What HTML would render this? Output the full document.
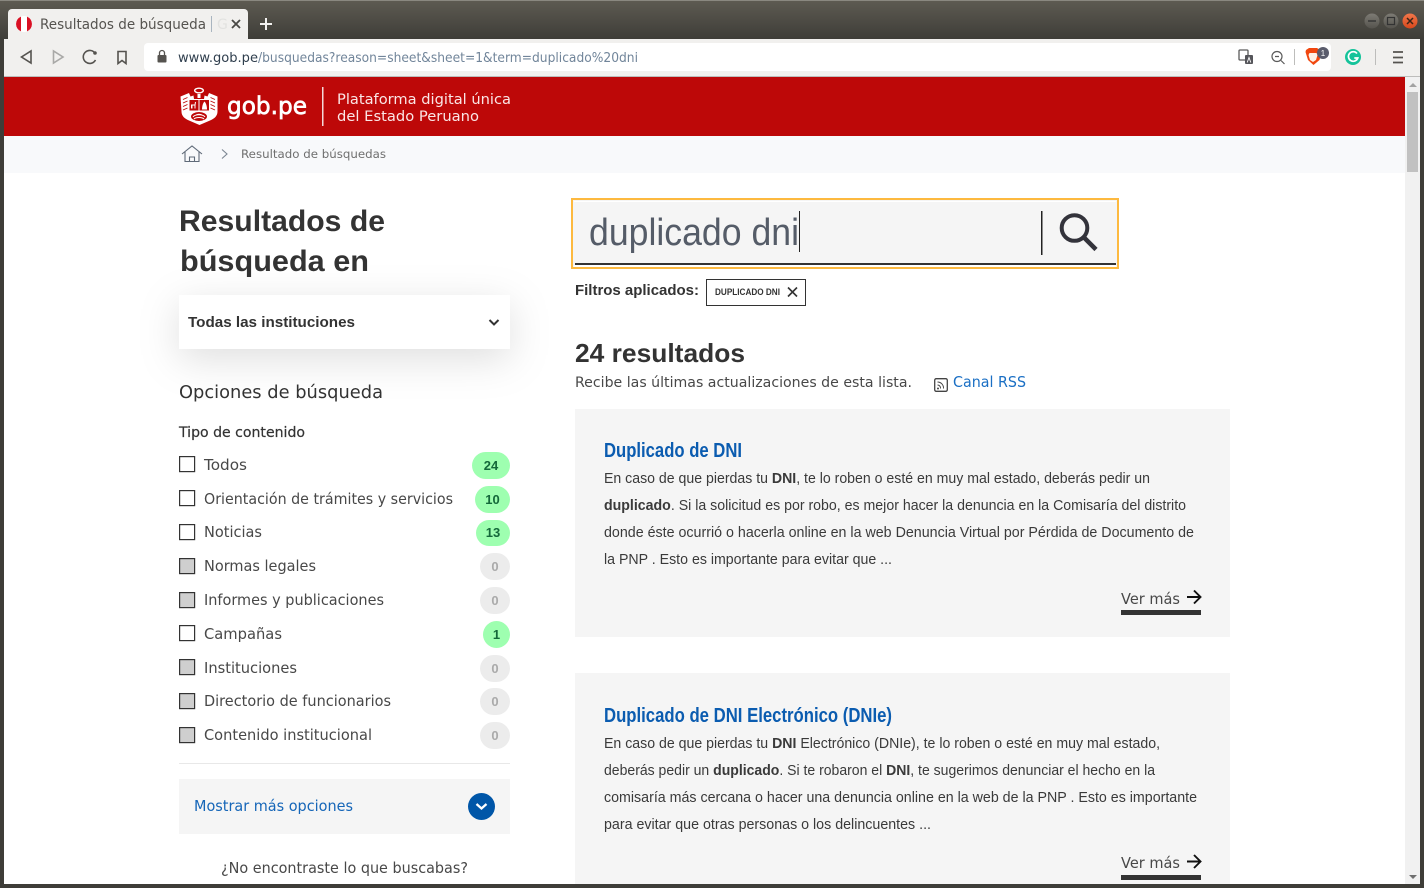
<!DOCTYPE html>
<html lang="es"><head><meta charset="utf-8"><title>Resultados de búsqueda</title>
<style>
html,body{margin:0;padding:0;width:1424px;height:888px;overflow:hidden;background:#fff}
svg{display:block}
text{white-space:pre}
.m{font-family:"DejaVu Sans","Liberation Sans",sans-serif;fill:#484848}
.b{font-family:"Liberation Sans",sans-serif;font-weight:700;fill:#333}
.r{font-family:"Liberation Sans",sans-serif;font-size:15px;fill:#3a3a3a}
.t{font-family:"Liberation Sans",sans-serif;font-size:20px;font-weight:700;fill:#0b5cb0}
.n{font-family:"Liberation Sans",sans-serif;font-size:13px;font-weight:700}
.ic{fill:none;stroke:#55534f;stroke-width:1.6}
</style></head><body>
<svg xmlns="http://www.w3.org/2000/svg" width="1424" height="888" viewBox="0 0 1424 888">
<defs>
<linearGradient id="tb" x1="0" y1="0" x2="0" y2="1"><stop offset="0" stop-color="#5e5b52"/><stop offset="1" stop-color="#3e3d38"/></linearGradient>
<linearGradient id="cl" x1="0" y1="0" x2="0" y2="1"><stop offset="0" stop-color="#f0764a"/><stop offset="1" stop-color="#d9481c"/></linearGradient>
<linearGradient id="gb" x1="0" y1="0" x2="0" y2="1"><stop offset="0" stop-color="#7d7b74"/><stop offset="1" stop-color="#55534d"/></linearGradient>
<filter id="sh" x="-30%" y="-120%" width="160%" height="360%"><feDropShadow dx="0" dy="10" stdDeviation="20" flood-color="#000" flood-opacity=".13"/></filter>
</defs>
<!-- window -->
<rect width="1424" height="888" fill="#3e3d38"/>
<rect y="0" width="1424" height="39" fill="url(#tb)"/>
<rect y="0" width="1424" height="1" fill="#8a8880"/>
<rect x="4" y="39" width="1416" height="37" fill="#f1f0ee"/>
<rect x="4" y="76" width="1416" height="1" fill="#bdbdbb"/>
<rect x="4" y="77" width="1416" height="807" fill="#fff"/>
<!-- tab -->
<path d="M8 39V13a4 4 0 0 1 4-4H244a4 4 0 0 1 4 4V39Z" fill="#f1f0ee"/>
<circle cx="24" cy="24" r="8" fill="#fff"/>
<path d="M21 16.6a8 8 0 0 0 0 14.8ZM27 16.6a8 8 0 0 1 0 14.8Z" fill="#d91023"/>
<text x="40" y="29" font-family="'DejaVu Sans',sans-serif" font-size="14" fill="#55534f" textLength="166" lengthAdjust="spacingAndGlyphs">Resultados de búsqueda</text>
<rect x="211" y="16" width="1" height="16" fill="#a9b5c0"/>
<text x="217" y="29" font-family="'DejaVu Sans',sans-serif" font-size="14" fill="#e2e2e0">G</text>
<path d="M232 20l8 8M240 20l-8 8" stroke="#4a4945" stroke-width="1.8" fill="none"/>
<path d="M266 18v12M260 24h12" stroke="#f2f1f0" stroke-width="2" fill="none"/>
<!-- window buttons -->
<circle cx="1372" cy="21" r="7.5" fill="url(#gb)"/><path d="M1368 21h8" stroke="#333" stroke-width="1.4"/>
<circle cx="1391" cy="21" r="7.5" fill="url(#gb)"/><rect x="1387.5" y="17.5" width="7" height="7" fill="none" stroke="#333" stroke-width="1.2"/>
<circle cx="1410" cy="21" r="7.5" fill="url(#cl)"/><path d="M1407 18l6 6M1413 18l-6 6" stroke="#3a2418" stroke-width="1.5"/>
<!-- nav -->
<path class="ic" d="M31 51v12l-9.5-6Z"/>
<path d="M53.500 51v12l9.500-6Z" fill="none" stroke="#a9a9a7" stroke-width="1.600"/>
<path class="ic" d="M95.500 60a6.500 6.500 0 1 1-.2-6.500"/><circle cx="95" cy="53" r="1.800" fill="#55534f"/>
<path class="ic" d="M118 51.500h8v12l-4-3-4 3Z"/>
<rect x="144" y="43" width="1187" height="28" rx="4" fill="#fff"/>
<rect x="157.500" y="55" width="9" height="7.500" rx="1" fill="#55534f"/><path d="M159.500 55v-2a2.500 2.500 0 0 1 5 0v2" fill="none" stroke="#55534f" stroke-width="1.300"/>
<text y="62" font-family="'DejaVu Sans',sans-serif" font-size="13.500" fill="#2f3e4d" x="178" textLength="80" lengthAdjust="spacingAndGlyphs">www.gob.pe</text>
<text y="62" font-family="'DejaVu Sans',sans-serif" font-size="13.500" fill="#71859a" x="258" textLength="380" lengthAdjust="spacingAndGlyphs">/busquedas?reason=sheet&amp;sheet=1&amp;term=duplicado%20dni</text>
<!-- toolbar right -->
<rect x="1239" y="50" width="9" height="10" rx="1" fill="#fff" stroke="#5a5a5a" stroke-width="1.300"/>
<rect x="1245" y="55" width="8" height="9" rx="1" fill="#55555a"/>
<path d="M1247.200 62.500l1.800-5 1.800 5" stroke="#fff" fill="none" stroke-width=".9"/>
<circle cx="1277" cy="56.500" r="5" fill="none" stroke="#5a5a5a" stroke-width="1.200"/><path d="M1275 56.500h4M1281 60.500l3.500 3.500" stroke="#5a5a5a" stroke-width="1.200"/>
<rect x="1294" y="49" width="1" height="16" fill="#bdbdbb"/>
<path d="M1306 50l3-2h8l3 2 1.500 2-2 8-6 5-5.500-5-2.500-8Z" fill="#f1470f"/>
<path d="M1309.500 53h7l1 2-1.500 5-3 2-3-2-1.500-5Z" fill="#fff3e8"/>
<circle cx="1323" cy="53" r="6" fill="#5a5c6c"/>
<text x="1323" y="56" text-anchor="middle" font-family="'Liberation Sans',sans-serif" font-size="8" fill="#fff">1</text>
<circle cx="1353" cy="57" r="8" fill="#15c39a"/>
<path d="M1357 53.500a4.800 4.800 0 1 0 .8 4.500h-3.500" fill="none" stroke="#fff" stroke-width="1.700"/>
<rect x="1375" y="49" width="1" height="16" fill="#bdbdbb"/>
<path d="M1393 52h10M1393 57.500h10M1393 62.500h10" stroke="#55534f" stroke-width="1.800"/>
<!-- red header -->
<rect x="4" y="77" width="1401" height="59" fill="#bd0808"/>
<!-- shield logo -->
<ellipse cx="199" cy="90.500" rx="4.300" ry="2.300" fill="none" stroke="#fff" stroke-width="1.400"/>
<path d="M197.500 94h3v4h-3Z" fill="#fff"/>
<path d="M180.500 96.500l8.500-3.500 1.500 3.500 3-1 .5 3.500h10l.5-3.500 3 1 1.500-3.500 8.500 3.500v15c0 4.500-3 7-7.500 9l-10.500 4.500-10.500-4.500c-4.500-2-7.500-4.500-7.500-9Z" fill="#fff"/>
<path d="M183 99.500l4.500-2M183 103l4.500-2M183 106.500l4.500-2M183 110l4.500-2M215 99.500l-4.500-2M215 103l-4.500-2M215 106.500l-4.500-2M215 110l-4.500-2" stroke="#bd0808" stroke-width=".9" fill="none"/>
<path d="M189.500 100h9v10.500h-9ZM199.500 100h9.500v10.500h-9.500Z" fill="#bd0808"/>
<path d="M191.500 108.500v-3.500h3.500l.5-3M192 105v3.500M195 105v3.500" stroke="#fff" stroke-width="1" fill="none"/>
<path d="M202 109.500c0-3.500 1-6.500 2.500-8 1.500 1.500 2.500 4.500 2.500 8Z" fill="#fff"/>
<path d="M186 113.500h26c-.5 2.500-2.500 4.500-5.500 6l-7.500 3-7.500-3c-3-1.500-5-3.500-5.500-6Z" fill="#fff"/>
<ellipse cx="199" cy="116.500" rx="8" ry="4.500" fill="#bd0808"/>
<path d="M193 117c2-3 10-3 12 0M194 119c2-2 8-2 10 0M196 115c2-1 4-1 6 0" stroke="#fff" stroke-width="1" fill="none"/>
<text x="227" y="114" font-family="'DejaVu Sans',sans-serif" font-size="24" fill="#fff" stroke="#fff" stroke-width=".7" textLength="80" lengthAdjust="spacingAndGlyphs">gob.pe</text>
<rect x="322" y="87" width="1.500" height="39" fill="#f4d8d8"/>
<text x="337" y="104" font-family="'DejaVu Sans',sans-serif" font-size="14" fill="#fbe6e6" textLength="174" lengthAdjust="spacingAndGlyphs">Plataforma digital única</text>
<text x="337" y="121" font-family="'DejaVu Sans',sans-serif" font-size="14" fill="#fbe6e6" textLength="142" lengthAdjust="spacingAndGlyphs">del Estado Peruano</text>
<!-- breadcrumb -->
<rect x="4" y="136" width="1401" height="37" fill="#f8f9fb"/>
<path d="M182 154l10-8 10 8M185 152v9.500h14V152M189.500 161.500v-4.500h5v4.500" fill="none" stroke="#5f6a78" stroke-width="1.100"/>
<path d="M222 149.500l5 4.500-5 4.500" fill="none" stroke="#7b8591" stroke-width="1.100"/>
<text x="241" y="158" class="m" font-size="11.500" style="fill:#6f6f6f" textLength="145" lengthAdjust="spacingAndGlyphs">Resultado de búsquedas</text>
<!-- scrollbar -->
<rect x="1405" y="77" width="15" height="807" fill="#f1f1f1"/>
<path d="M1409 87l4-4 4 4Z" fill="#a3a3a3"/>
<rect x="1407" y="92" width="11" height="80" fill="#c1c1c1"/>
<path d="M1409 875l4 4 4-4Z" fill="#6f6f6f"/>
<!-- left -->
<text x="179" y="231" class="b" font-size="30" textLength="206" lengthAdjust="spacingAndGlyphs">Resultados de</text>
<text x="180" y="271" class="b" font-size="30" textLength="189" lengthAdjust="spacingAndGlyphs">búsqueda en</text>
<rect x="179" y="295" width="331" height="54" fill="#fff" filter="url(#sh)"/>
<text x="188" y="327" class="b" font-size="15" textLength="167" lengthAdjust="spacingAndGlyphs">Todas las instituciones</text>
<path d="M489.500 320l4.500 4.500 4.500-4.500" fill="none" stroke="#333" stroke-width="2"/>
<text x="179" y="398" class="m" font-size="18" style="fill:#333" textLength="204" lengthAdjust="spacingAndGlyphs">Opciones de búsqueda</text>
<text x="179" y="437" class="m" font-size="14" style="fill:#333" stroke="#333" stroke-width=".2" textLength="126" lengthAdjust="spacingAndGlyphs">Tipo de contenido</text>

<g fill="#fff" stroke="#333" stroke-width="1.200">
<rect x="179.600" y="456.600" width="15" height="15"/>
<rect x="179.600" y="490.600" width="15" height="15"/>
<rect x="179.600" y="524.600" width="15" height="15"/>
<rect x="179.600" y="625.600" width="15" height="15"/>
<g fill="#cfcfcf">
<rect x="179.600" y="558.600" width="15" height="15"/>
<rect x="179.600" y="592.600" width="15" height="15"/>
<rect x="179.600" y="659.600" width="15" height="15"/>
<rect x="179.600" y="693.600" width="15" height="15"/>
<rect x="179.600" y="727.600" width="15" height="15"/>
</g></g>
<text class="m" x="204" y="470" font-size="15" textLength="43" lengthAdjust="spacingAndGlyphs">Todos</text>
<text class="m" x="204" y="504" font-size="15" textLength="249" lengthAdjust="spacingAndGlyphs">Orientación de trámites y servicios</text>
<text class="m" x="204" y="537" font-size="15" textLength="58" lengthAdjust="spacingAndGlyphs">Noticias</text>
<text class="m" x="204" y="571" font-size="15" textLength="112" lengthAdjust="spacingAndGlyphs">Normas legales</text>
<text class="m" x="204" y="605" font-size="15" textLength="180" lengthAdjust="spacingAndGlyphs">Informes y publicaciones</text>
<text class="m" x="204" y="639" font-size="15" textLength="78" lengthAdjust="spacingAndGlyphs">Campañas</text>
<text class="m" x="204" y="673" font-size="15" textLength="93" lengthAdjust="spacingAndGlyphs">Instituciones</text>
<text class="m" x="204" y="706" font-size="15" textLength="187" lengthAdjust="spacingAndGlyphs">Directorio de funcionarios</text>
<text class="m" x="204" y="740" font-size="15" textLength="168" lengthAdjust="spacingAndGlyphs">Contenido institucional</text>
<!-- badges -->
<rect x="472" y="452" width="38" height="27" rx="13.500" fill="#9effb0"/><text class="n" x="491" y="470" text-anchor="middle" fill="#14683a">24</text>
<rect x="475" y="486" width="35" height="27" rx="13.500" fill="#9effb0"/><text class="n" x="492.500" y="504" text-anchor="middle" fill="#14683a">10</text>
<rect x="476" y="520" width="34" height="26" rx="13" fill="#9effb0"/><text class="n" x="493" y="537" text-anchor="middle" fill="#14683a">13</text>
<rect x="483" y="621" width="27" height="27" rx="13.500" fill="#9effb0"/><text class="n" x="496.500" y="639" text-anchor="middle" fill="#14683a">1</text>
<g fill="#ececec">
<rect x="480" y="553" width="30" height="27" rx="13.500"/>
<rect x="480" y="587" width="30" height="27" rx="13.500"/>
<rect x="480" y="655" width="30" height="27" rx="13.500"/>
<rect x="480" y="688" width="30" height="27" rx="13.500"/>
<rect x="480" y="722" width="30" height="27" rx="13.500"/>
</g>
<g fill="#aaa">
<text class="n" x="495" y="571" text-anchor="middle">0</text>
<text class="n" x="495" y="605" text-anchor="middle">0</text>
<text class="n" x="495" y="673" text-anchor="middle">0</text>
<text class="n" x="495" y="706" text-anchor="middle">0</text>
<text class="n" x="495" y="740" text-anchor="middle">0</text>
</g>
<rect x="179" y="763" width="331" height="1" fill="#e8e8e8"/>
<rect x="179" y="779" width="331" height="55" fill="#f5f5f5"/>
<text x="194" y="811" class="m" font-size="15" style="fill:#1666b8" textLength="159" lengthAdjust="spacingAndGlyphs">Mostrar más opciones</text>
<circle cx="481.500" cy="806.500" r="13.500" fill="#0056a8"/>
<path d="M476.500 804l5 4.500 5-4.500" fill="none" stroke="#fff" stroke-width="2.300"/>
<text x="221" y="873" class="m" font-size="15" textLength="247" lengthAdjust="spacingAndGlyphs">¿No encontraste lo que buscabas?</text>
<!-- search -->
<rect x="572" y="199" width="546" height="69" fill="#f5f5f5" stroke="#fdb93f" stroke-width="2"/>
<rect x="574" y="201" width="542" height="1" fill="#fff"/>
<rect x="574" y="265" width="542" height="2" fill="#fff"/>
<rect x="575" y="263" width="541" height="2" fill="#333"/>
<text x="589" y="245" font-family="'Liberation Sans',sans-serif" font-size="38" fill="#555c68" textLength="210" lengthAdjust="spacingAndGlyphs">duplicado dni</text>
<rect x="799" y="211" width="1" height="41" fill="#222"/>
<rect x="1041" y="211" width="1.500" height="44" fill="#222"/>
<circle cx="1074.500" cy="228" r="12.800" fill="none" stroke="#33333b" stroke-width="4"/>
<path d="M1084 237.500l12 12" stroke="#33333b" stroke-width="4.500"/>
<text x="575" y="295" class="b" font-size="15" textLength="124" lengthAdjust="spacingAndGlyphs">Filtros aplicados:</text>
<rect x="706.500" y="279.500" width="99" height="26" fill="#fff" stroke="#333"/>
<text x="715" y="295" font-family="'Liberation Sans',sans-serif" font-size="9.500" font-weight="700" fill="#333" textLength="65" lengthAdjust="spacingAndGlyphs">DUPLICADO DNI</text>
<path d="M788 287.500l9 9M797 287.500l-9 9" stroke="#333" stroke-width="1.600"/>
<text x="575" y="362" class="b" font-size="26" textLength="170" lengthAdjust="spacingAndGlyphs">24 resultados</text>
<text x="575" y="387" class="m" font-size="14.500" textLength="337" lengthAdjust="spacingAndGlyphs">Recibe las últimas actualizaciones de esta lista.</text>
<rect x="934.700" y="378.700" width="12.600" height="12.600" rx="1.500" fill="#fff" stroke="#444" stroke-width="1.300"/>
<path d="M937.500 382a6 6 0 0 1 6 6.500M937.500 385a3 3 0 0 1 3 3.500" fill="none" stroke="#444" stroke-width="1"/><circle cx="938" cy="388.500" r="1" fill="#444"/>
<text x="953" y="387" class="m" font-size="15" style="fill:#1a6fc4" textLength="73" lengthAdjust="spacingAndGlyphs">Canal RSS</text>
<!-- card 1 -->
<rect x="575" y="409" width="655" height="228" fill="#f5f5f5"/>
<text x="604" y="457" class="t" textLength="138" lengthAdjust="spacingAndGlyphs">Duplicado de DNI</text>
<text class="r" x="604" y="483" textLength="546" lengthAdjust="spacingAndGlyphs">En caso de que pierdas tu <tspan font-weight="700">DNI</tspan>, te lo roben o esté en muy mal estado, deberás pedir un</text>
<text class="r" x="604" y="510" textLength="582" lengthAdjust="spacingAndGlyphs"><tspan font-weight="700">duplicado</tspan>. Si la solicitud es por robo, es mejor hacer la denuncia en la Comisaría del distrito</text>
<text class="r" x="604" y="537" textLength="590" lengthAdjust="spacingAndGlyphs">donde éste ocurrió o hacerla online en la web Denuncia Virtual por Pérdida de Documento de</text>
<text class="r" x="604" y="564" textLength="288" lengthAdjust="spacingAndGlyphs">la PNP . Esto es importante para evitar que ...</text>
<text x="1121" y="604" class="m" font-size="15" textLength="59" lengthAdjust="spacingAndGlyphs">Ver más</text>
<path d="M1187 597h13M1194 590.500l6.500 6.500-6.500 6.500" fill="none" stroke="#111" stroke-width="1.900"/>
<rect x="1121" y="610" width="80" height="5" fill="#333"/>
<!-- card 2 -->
<rect x="575" y="673" width="655" height="211" fill="#f5f5f5"/>
<text x="604" y="722" class="t" textLength="288" lengthAdjust="spacingAndGlyphs">Duplicado de DNI Electrónico (DNIe)</text>
<text class="r" x="604" y="748" textLength="556" lengthAdjust="spacingAndGlyphs">En caso de que pierdas tu <tspan font-weight="700">DNI</tspan> Electrónico (DNIe), te lo roben o esté en muy mal estado,</text>
<text class="r" x="604" y="775" textLength="551" lengthAdjust="spacingAndGlyphs">deberás pedir un <tspan font-weight="700">duplicado</tspan>. Si te robaron el <tspan font-weight="700">DNI</tspan>, te sugerimos denunciar el hecho en la</text>
<text class="r" x="604" y="802" textLength="593" lengthAdjust="spacingAndGlyphs">comisaría más cercana o hacer una denuncia online en la web de la PNP . Esto es importante</text>
<text class="r" x="604" y="829" textLength="327" lengthAdjust="spacingAndGlyphs">para evitar que otras personas o los delincuentes ...</text>
<text x="1121" y="868" class="m" font-size="15" textLength="59" lengthAdjust="spacingAndGlyphs">Ver más</text>
<path d="M1187 861.500h13M1194 855l6.500 6.500-6.500 6.500" fill="none" stroke="#111" stroke-width="1.900"/>
<rect x="1121" y="875" width="80" height="5" fill="#333"/>
</svg>
</body></html>
